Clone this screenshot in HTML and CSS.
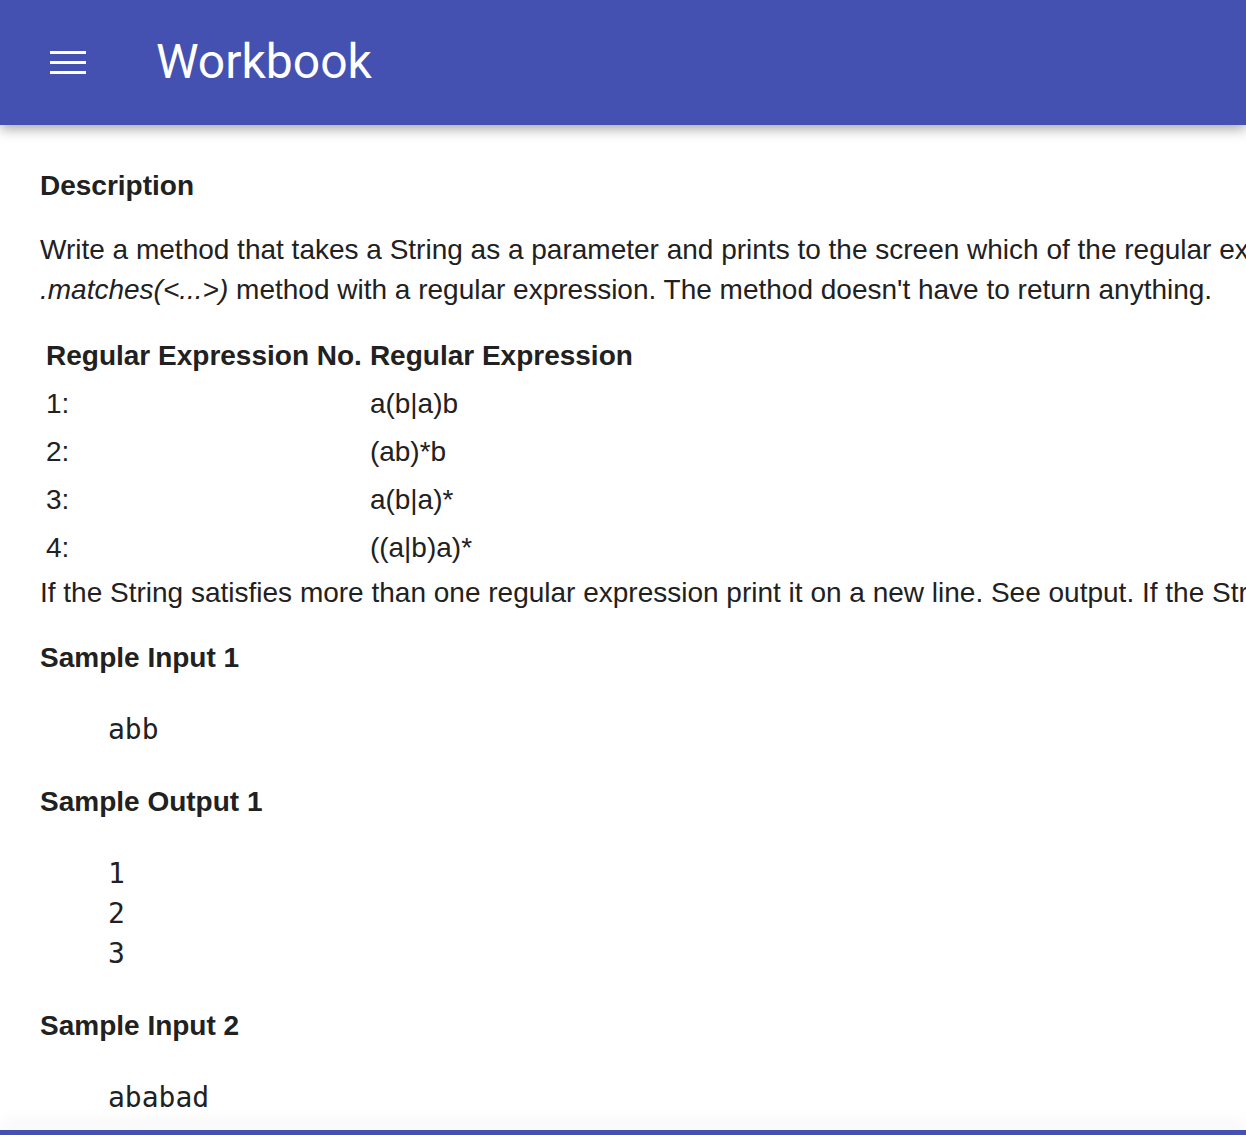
FILE: index.html
```html
<!DOCTYPE html>
<html lang="en">
<head>
<meta charset="utf-8">
<title>Workbook</title>
<link rel="stylesheet" href="styles.css">
</head>
<body>
<header class="appbar">
  <button class="menu-btn" aria-label="Menu">
    <svg width="36" height="24" viewBox="0 0 36 24"><rect x="0" y="0" width="36" height="3" fill="#fff"/><rect x="0" y="10" width="36" height="3" fill="#fff"/><rect x="0" y="20" width="36" height="3" fill="#fff"/></svg>
  </button>
  <h1 class="app-title">Workbook</h1>
</header>
<main class="content">
  <h2 class="heading first">Description</h2>
  <p class="text desc">Write a method that takes a String as a parameter and prints to the screen which of the regular expressions it satisfies. Use the String<br><em>.matches(&lt;...&gt;)</em> method with a regular expression. The method doesn't have to return anything.</p>
  <table class="regex-table">
    <thead>
      <tr><th>Regular Expression No.</th><th>Regular Expression</th></tr>
    </thead>
    <tbody>
      <tr><td>1:</td><td>a(b|a)b</td></tr>
      <tr><td>2:</td><td>(ab)*b</td></tr>
      <tr><td>3:</td><td>a(b|a)*</td></tr>
      <tr><td>4:</td><td>((a|b)a)*</td></tr>
    </tbody>
  </table>
  <p class="text note">If the String satisfies more than one regular expression print it on a new line. See output. If the String does not satisfy any of the regular expressions print nothing.</p>
  <h2 class="heading">Sample Input 1</h2>
  <pre class="sample">abb</pre>
  <h2 class="heading">Sample Output 1</h2>
  <pre class="sample">1
2
3</pre>
  <h2 class="heading">Sample Input 2</h2>
  <pre class="sample">ababad</pre>
</main>
<footer class="bottombar"></footer>
</body>
</html>
```
FILE: styles.css
```css
html, body {
  margin: 0;
  padding: 0;
  overflow: hidden;
  background: #ffffff;
}
body {
  font-family: "Liberation Sans", Arial, sans-serif;
  color: #212121;
  height: 1135px;
}
.appbar {
  height: 125px;
  background: #4551b1;
  display: flex;
  align-items: center;
  box-shadow: 0 4px 12px rgba(0, 0, 0, 0.35);
  position: relative;
  z-index: 2;
}
.menu-btn {
  background: none;
  border: none;
  padding: 0;
  margin: 0 0 0 50px;
  width: 36px;
  height: 24px;
  display: flex;
}
.app-title {
  margin: 0 0 0 70px;
  font-family: Roboto, "Liberation Sans", sans-serif;
  font-weight: 400;
  font-size: 48px;
  color: #ffffff;
  line-height: 1;
  padding-bottom: 2px;
}
.content {
  padding: 41px 0 0 40px;
  white-space: nowrap;
}
.heading {
  margin: 25px 0 0;
  font-size: 28px;
  font-weight: 700;
  line-height: 40px;
}
.heading.first {
  margin-top: 0;
}
.text {
  margin: 0;
  font-size: 28px;
  line-height: 40px;
}
.desc {
  margin-top: 24px;
}
.regex-table {
  margin-top: 22px;
  border-collapse: collapse;
  font-size: 28px;
}
.regex-table th,
.regex-table td {
  height: 48px;
  padding: 0 2px 0 6px;
  text-align: left;
  vertical-align: middle;
}
.regex-table th {
  font-weight: 700;
}
.note {
  margin-top: 1px;
}
.sample {
  margin: 32px 0 0;
  padding-left: 68px;
  font-family: "DejaVu Sans Mono", monospace;
  font-size: 28px;
  line-height: 40px;
  color: #212121;
}
.sample + .heading {
  margin-top: 32px;
}
.bottombar {
  position: fixed;
  left: 0;
  right: 0;
  bottom: 0;
  height: 5px;
  background: #4551b1;
  box-shadow: 0 -6px 18px rgba(0, 0, 0, 0.1);
}
```
